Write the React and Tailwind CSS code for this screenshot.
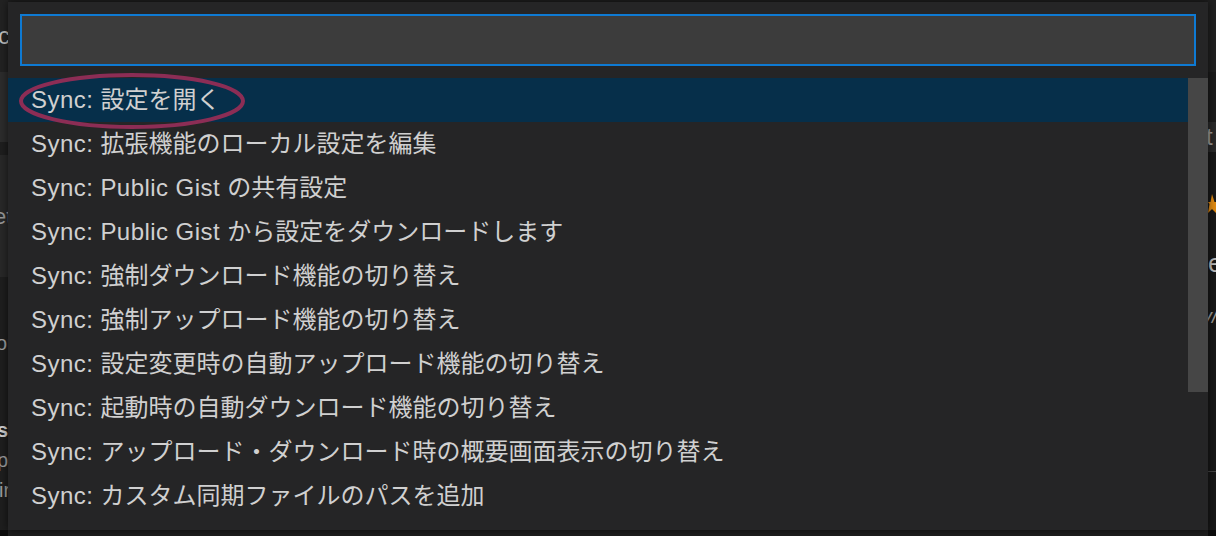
import React from "react";

const items = [
  "設定を開く",
  "拡張機能のローカル設定を編集",
  "Public Gist の共有設定",
  "Public Gist から設定をダウンロードします",
  "強制ダウンロード機能の切り替え",
  "強制アップロード機能の切り替え",
  "設定変更時の自動アップロード機能の切り替え",
  "起動時の自動ダウンロード機能の切り替え",
  "アップロード・ダウンロード時の概要画面表示の切り替え",
  "カスタム同期ファイルのパスを追加",
];

const font = {
  fontFamily: '"Liberation Sans", "Noto Sans CJK JP", sans-serif',
};

// latin runs get a touch of tracking so they come out as wide as the mac font
function Label({ text }) {
  return text.split(/([A-Za-z:][A-Za-z: ]*)/).map((part, i) =>
    /[A-Za-z]/.test(part) ? (
      <span key={i} className="tracking-[0.45px]">
        {part}
      </span>
    ) : (
      <span key={i}>{part}</span>
    )
  );
}

function LeftEdge() {
  return (
    <div className="flex h-full w-[8px] flex-col overflow-hidden text-[#bdbdbd]" style={font}>
      <div className="flex h-[72px] items-center bg-[#222222] text-[24px]">
        <span className="-ml-[2px]">c</span>
      </div>
      <div className="h-[70px] bg-[#2c2c2c]" />
      <div className="h-[13px] bg-[#1e1e1e]" />
      <div className="flex h-[122px] items-center bg-[#282828] text-[22px] text-[#9a9a9a]">
        <span className="-ml-[6px]">et</span>
      </div>
      <div className="flex h-[253px] flex-col bg-[#1e1e1e] text-[20px] text-[#9e9e9e]">
        <span className="mt-[54px] -ml-[4px] leading-[24px]">ou</span>
        <span className="mt-[64px] -ml-[3px] font-bold leading-[22px] text-[#d0d0d0]">s</span>
        <span className="mt-[8px] -ml-[3px] leading-[22px]">p</span>
        <span className="mt-[8px] -ml-[1px] leading-[22px]">ir</span>
      </div>
      <div className="flex-1 bg-[#0c0c0c]" />
    </div>
  );
}

function RightEdge() {
  return (
    <div className="flex h-full w-[8px] flex-col overflow-hidden text-[#9a9a9a]" style={font}>
      <div className="h-[72px] bg-[#202020]" />
      <div className="h-[50px] bg-[#1b1b1b]" />
      <div className="flex h-[30px] items-center bg-[#2a2a2a] text-[24px]">
        <span className="-ml-[2px]">t</span>
      </div>
      <div className="flex h-[378px] flex-col bg-[#181818]">
        <span className="mt-[42px] h-[22px] w-[8px]">
          <svg width="8" height="22" viewBox="0 0 8 22">
            <path d="M4 0 L6.5 8 L8 8 L8 19 L4 15 L0 19 L1.5 10 L0 8 L2.5 8 Z" fill="#e08a12" />
          </svg>
        </span>
        <span className="mt-[34px] text-[26px] leading-[26px] text-[#bdbdbd]">e</span>
        <span className="mt-[30px] -ml-[6px] text-[20px] italic leading-[20px]">v/</span>
        <div className="mt-[145px] h-px w-full bg-[#444444]" />
      </div>
      <div className="flex-1 bg-[#0c0c0c]" />
    </div>
  );
}

export default function App() {
  return (
    <div className="relative flex h-[536px] w-[1216px] justify-between overflow-hidden bg-[#1e1e1e]">
      <LeftEdge />
      <RightEdge />

      <div className="absolute left-[8px] top-[2px] flex h-[528px] w-[1200px] flex-col bg-[#252526] pb-[12px] pt-[12px] shadow-[0_0_8px_rgba(0,0,0,0.6)]">
        <div className="mx-[12px] h-[52px] border-2 border-[#0e7ad3] bg-[#3c3c3c]" />

        <div className="relative mt-[12px] flex flex-col" style={font}>
          {items.map((label, i) => (
            <div
              key={label}
              className={`flex h-[44px] w-[1180px] items-center whitespace-pre pl-[23px] text-[24px] text-[#d0d0d0] ${
                i === 0 ? "bg-[#062f4a]" : ""
              }`}
            >
              <Label text={`Sync: ${label}`} />
            </div>
          ))}

          <div className="absolute right-0 top-0 h-[314px] w-[20px] bg-[rgba(121,121,121,0.4)]" />
        </div>
      </div>

      <svg
        className="pointer-events-none absolute left-[17px] top-[71px]"
        width="230"
        height="60"
        viewBox="0 0 230 60"
      >
        <ellipse cx="115" cy="30" rx="111" ry="26" fill="none" stroke="#8c2d55" strokeWidth="4" />
      </svg>
    </div>
  );
}
